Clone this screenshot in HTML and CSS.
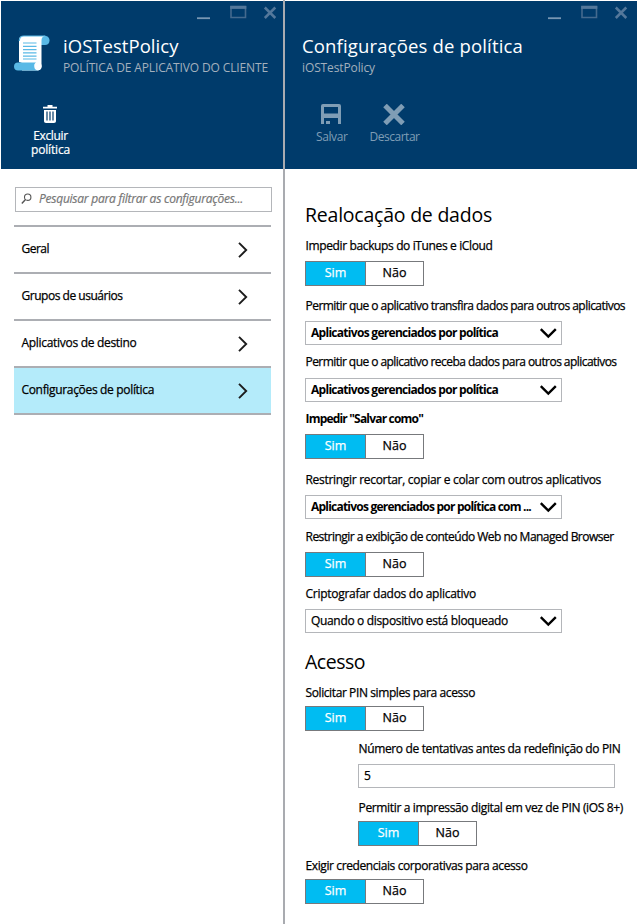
FILE: index.html
```html
<!DOCTYPE html>
<html lang="pt-BR">
<head>
<meta charset="utf-8">
<title>iOSTestPolicy</title>
<link rel="stylesheet" href="styles.css">
</head>
<body>
<svg class="defs" aria-hidden="true">
  <symbol id="wincontrols" viewBox="0 0 82 16">
    <path d="M0 13.200H13" stroke="#7897b3" stroke-width="1.800" fill="none"/>
    <path d="M34 1.500H48.500V12.500H34Z" stroke="#446a8e" stroke-width="1.600" fill="none"/>
    <path d="M33.200 2.400H49.300" stroke="#54789b" stroke-width="3" fill="none"/>
    <path d="M67.800 2.500L78.300 13M78.300 2.500L67.800 13" stroke="#54789b" stroke-width="2.500" fill="none"/>
  </symbol>
  <symbol id="chevron" viewBox="0 0 10 16"><path d="M1 .8L8.200 8L1 15.200" fill="none" stroke="#1c1c1c" stroke-width="1.900"/></symbol>
  <symbol id="arrow" viewBox="0 0 18 12"><path d="M1.800 2.200L9.300 9.600L16.800 2.200" fill="none" stroke="#000" stroke-width="2.400"/></symbol>
</svg>
<div class="portal">
  <section class="blade blade-policy">
    <header class="head">
      <svg class="win" width="82" height="16"><use href="#wincontrols"/></svg>
      <div class="ident">
        <svg class="scroll" width="36" height="37" viewBox="0 0 36 37">
          <path d="M29 1C33 0 35.500 2.500 35.500 5.500C35.500 8.500 33.500 10 31 10H27V3Z" fill="#59b9e6"/>
          <path d="M9 1H31C28.500 1.500 27.500 3 27.500 5.500V30C27.500 33.500 26 35.500 22.500 35.500H8V28L5 27V5C5 2.500 6.500 1 9 1Z" fill="#fff"/>
          <path d="M5.300 6C5.300 2.500 7 1 10 1H31" fill="none" stroke="#59b9e6" stroke-width="1.200"/>
          <path d="M4 27.500H22C20 28.500 20 31 21.500 32C23 32.800 24.500 32 24.500 30.500C28 31 27 35.500 23 35.500H4C1.500 35.500 0 34 0 31.500S1.500 27.500 4 27.500Z" fill="#59b9e6"/>
          <circle cx="24" cy="31.500" r="3.700" fill="#fff"/>
          <path d="M9 8H22.500M9 11.300H22.500M9 14.600H22.500M9 17.900H22.500M9 21.200H22.500M9 24H22.500" stroke="#59b9e6" stroke-width="1.200"/>
        </svg>
        <div class="names">
          <h1 class="t-title1">iOSTestPolicy</h1>
          <p class="t-sub1">POLÍTICA DE APLICATIVO DO CLIENTE</p>
        </div>
      </div>
      <div class="commands">
        <div class="cmd cmd-delete">
          <svg width="16" height="20" viewBox="0 0 16 20"><path d="M0 2.800H14V4.500H0ZM4.500 1H9.500V3H4.500ZM1 6H13V17C13 18.300 12.300 19 11 19H3C1.700 19 1 18.300 1 17Z" fill="#fff"/><path d="M4 7.500V16.500M7 7.500V16.500M10 7.500V16.500" stroke="#003b6b" stroke-width="1.200"/></svg>
          <span class="t-exc">Excluir</span>
          <span class="t-pol">política</span>
        </div>
      </div>
    </header>
    <div class="search">
      <svg width="11" height="12" viewBox="0 0 11 12"><circle cx="6.700" cy="4.200" r="3.200" fill="none" stroke="#555" stroke-width="1.100"/><path d="M4.500 6.500L.8 10.500" stroke="#555" stroke-width="1.400"/></svg>
      <span class="t-search">Pesquisar para filtrar as configurações...</span>
    </div>
    <nav class="menu">
      <a><span class="t-nav1">Geral</span><svg width="10" height="16"><use href="#chevron"/></svg></a>
      <a><span class="t-nav2">Grupos de usuários</span><svg width="10" height="16"><use href="#chevron"/></svg></a>
      <a><span class="t-nav3">Aplicativos de destino</span><svg width="10" height="16"><use href="#chevron"/></svg></a>
      <a class="active"><span class="t-nav4">Configurações de política</span><svg width="10" height="16"><use href="#chevron"/></svg></a>
    </nav>
  </section>
  <section class="blade blade-settings">
    <header class="head">
      <svg class="win" width="82" height="16"><use href="#wincontrols"/></svg>
      <div class="ident">
        <div class="names">
          <h1 class="t-title2">Configurações de política</h1>
          <p class="t-sub2">iOSTestPolicy</p>
        </div>
      </div>
      <div class="commands dim">
        <div class="cmd cmd-save">
          <svg width="20" height="21" viewBox="0 0 20 21"><path d="M2 0H18Q20 0 20 2V20H17V14H3V20H0V2Q0 0 2 0ZM3 3V9.500H17V3ZM5 17H9V20H5Z" fill="#7f9db5" fill-rule="evenodd"/></svg>
          <span class="t-salvar">Salvar</span>
        </div>
        <div class="cmd cmd-discard">
          <svg width="24" height="21" viewBox="0 0 24 21"><path d="M2 1.500L20 19.500M20 1.500L2 19.500" stroke="#7f9db5" stroke-width="5"/></svg>
          <span class="t-desc">Descartar</span>
        </div>
      </div>
    </header>
    <div class="form">
      <h2 class="t-h1">Realocação de dados</h2>
      <div class="field end11"><label class="t-l1">Impedir backups do iTunes e iCloud</label><div class="toggle"><span class="on">Sim</span><span class="off">Não</span></div></div>
      <div class="field"><label class="t-l2">Permitir que o aplicativo transfira dados para outros aplicativos</label><div class="select bold"><span class="t-s1">Aplicativos gerenciados por política</span><svg width="18" height="12"><use href="#arrow"/></svg></div></div>
      <div class="field lead9"><label class="t-l3">Permitir que o aplicativo receba dados para outros aplicativos</label><div class="select bold"><span class="t-s1">Aplicativos gerenciados por política</span><svg width="18" height="12"><use href="#arrow"/></svg></div></div>
      <div class="field end12"><label class="t-l4 strong">Impedir "Salvar como"</label><div class="toggle"><span class="on">Sim</span><span class="off">Não</span></div></div>
      <div class="field end9"><label class="t-l5">Restringir recortar, copiar e colar com outros aplicativos</label><div class="select bold"><span class="t-s3">Aplicativos gerenciados por política com ...</span><svg width="18" height="12"><use href="#arrow"/></svg></div></div>
      <div class="field"><label class="t-l6">Restringir a exibição de conteúdo Web no Managed Browser</label><div class="toggle"><span class="on">Sim</span><span class="off">Não</span></div></div>
      <div class="field"><label class="t-l7">Criptografar dados do aplicativo</label><div class="select"><span class="t-s4">Quando o dispositivo está bloqueado</span><svg width="18" height="12"><use href="#arrow"/></svg></div></div>
      <h2 class="second t-h2">Acesso</h2>
      <div class="field lead6 end9"><label class="t-l8">Solicitar PIN simples para acesso</label><div class="toggle"><span class="on">Sim</span><span class="off">Não</span></div></div>
      <div class="nested">
        <div class="field end11"><label class="t-l9">Número de tentativas antes da redefinição do PIN</label><div class="select"><span>5</span></div></div>
        <div class="field lead6 end11"><label class="t-l10">Permitir a impressão digital em vez de PIN (iOS 8+)</label><div class="toggle"><span class="on">Sim</span><span class="off">Não</span></div></div>
      </div>
      <div class="field lead6"><label class="t-l11">Exigir credenciais corporativas para acesso</label><div class="toggle"><span class="on">Sim</span><span class="off">Não</span></div></div>
    </div>
  </section>
</div>
</body>
</html>
```
FILE: styles.css
```css
* { box-sizing: border-box; }
body { margin: 0; background: #fff; color: #000; font: 400 12px/16px "Open Sans", "Noto Sans", sans-serif; }
h1, h2, p { margin: 0; font-weight: 400; white-space: nowrap; }
span { white-space: nowrap; }
.defs { position: absolute; width: 0; height: 0; }
.portal { display: flex; width: 638px; height: 924px; padding: 1px 1px 0; overflow: hidden; }
.blade-policy { width: 284px; border-right: 2px solid #a9abb0; margin-top: -1px; padding-top: 1px; }
.blade-settings { flex: 1; }
.head { height: 168px; background: #003b6b; color: #fff; display: flex; flex-direction: column; }
.win { align-self: flex-end; margin: 4px 4px 0 0; flex: none; }
.blade-settings .win { margin-right: 7px; }
.ident { display: flex; margin-top: 14px; padding-left: 13px; height: 42px; }
.blade-settings .ident { padding-left: 17px; }
.scroll { margin-right: 13px; }
.names h1 { font-size: 18.5px; line-height: 24px; margin-top: -1px; }
.names p { color: #a3b0bd; line-height: 16px; margin-top: 2px; }
.commands { display: flex; margin-top: 27px; }
.cmd { display: flex; flex-direction: column; align-items: center; line-height: 14px; }
.cmd-delete { margin-left: 30px; -webkit-text-stroke: .2px #fff; }
.cmd svg { margin-bottom: 5px; }
.dim { color: #7f9db5; }
.cmd-save { margin-left: 31px; }
.cmd-save svg { margin-right: 2px; }
.cmd-discard { margin-left: 22px; }
.search { width: 257px; height: 25px; margin: 18px 0 0 14px; border: 1px solid #b4b6ba; display: flex; align-items: center; padding-left: 5px; color: #777; font-style: italic; -webkit-text-stroke: .2px #777; }
.search svg { margin: 0 7px 2px 0; }
.search span { margin-top: -1px; }
.menu { width: 257px; margin: 13px 0 0 13px; border-top: 2px solid #acaeb3; -webkit-text-stroke: .25px #000; }
.menu a { display: flex; justify-content: space-between; align-items: center; height: 47px; border-bottom: 2px solid #acaeb3; padding: 0 23px 0 7.5px; }
.menu a > span { margin-top: -1px; }
.active { background: #b4ebfa; }
.form { padding: 34px 0 0 20px; }
h2 { font-size: 19.5px; line-height: 24px; margin-bottom: 11px; }
h2.second { margin: 17px 0 10px; }
.field { margin-bottom: 8px; display: flex; flex-direction: column; align-items: flex-start; gap: 8px; }
.form > h2:first-child { margin-bottom: 10px; }
.field label { height: 16px; line-height: 18px; padding-left: .5px; white-space: nowrap; -webkit-text-stroke: .25px #000; }
.lead9 { gap: 9px; }
.lead6 { gap: 6px; }
.end9 { margin-bottom: 9px; }
.end11 { margin-bottom: 11px; }
.end12 { margin-bottom: 12px; }
.nested { padding-left: 53px; }
.toggle { display: flex; width: 119px; height: 25px; border: 1px solid #77797c; font-size: 12.5px; }
.toggle span { text-align: center; line-height: 22px; }
.toggle .on { flex: 0 0 60px; background: #00bcf2; color: #fff; border-right: 1px solid #77797c; -webkit-text-stroke: .25px #fff; }
.toggle .off { flex: 1; -webkit-text-stroke: .25px #000; }
.select { display: flex; justify-content: space-between; align-items: center; width: 257px; height: 24px; border: 1px solid #b4b6ba; padding: 0 4px 0 5px; -webkit-text-stroke: .25px #000; }
.bold, .field .strong { font-weight: 700; -webkit-text-stroke: 0; }

/* per-string tracking */
.t-title1 { letter-spacing: .044px; }
.t-sub1 { letter-spacing: -.132px; }
.t-exc { letter-spacing: -.362px; }
.t-pol { letter-spacing: -.168px; }
.t-search { letter-spacing: -.241px; }
.t-nav1 { letter-spacing: -.516px; }
.t-nav2 { letter-spacing: -.476px; }
.t-nav3 { letter-spacing: -.302px; }
.t-nav4 { letter-spacing: -.329px; }
.t-title2 { letter-spacing: .161px; }
.t-sub2 { letter-spacing: -.119px; }
.t-salvar { letter-spacing: -.391px; }
.t-desc { letter-spacing: -.483px; }
.t-h1 { letter-spacing: -.226px; }
.t-h2 { letter-spacing: -.49px; }
.t-l1 { letter-spacing: -.369px; }
.t-l2 { letter-spacing: -.541px; }
.t-l3 { letter-spacing: -.552px; }
.t-l4 { letter-spacing: -.813px; }
.t-l5 { letter-spacing: -.3px; }
.t-l6 { letter-spacing: -.522px; }
.t-l7 { letter-spacing: -.273px; }
.t-l8 { letter-spacing: -.398px; }
.t-l9 { letter-spacing: -.355px; }
.t-l10 { letter-spacing: -.341px; }
.t-l11 { letter-spacing: -.396px; }
.t-s1 { letter-spacing: -.709px; }
.t-s3 { letter-spacing: -.782px; }
.t-s4 { letter-spacing: -.33px; }
```
